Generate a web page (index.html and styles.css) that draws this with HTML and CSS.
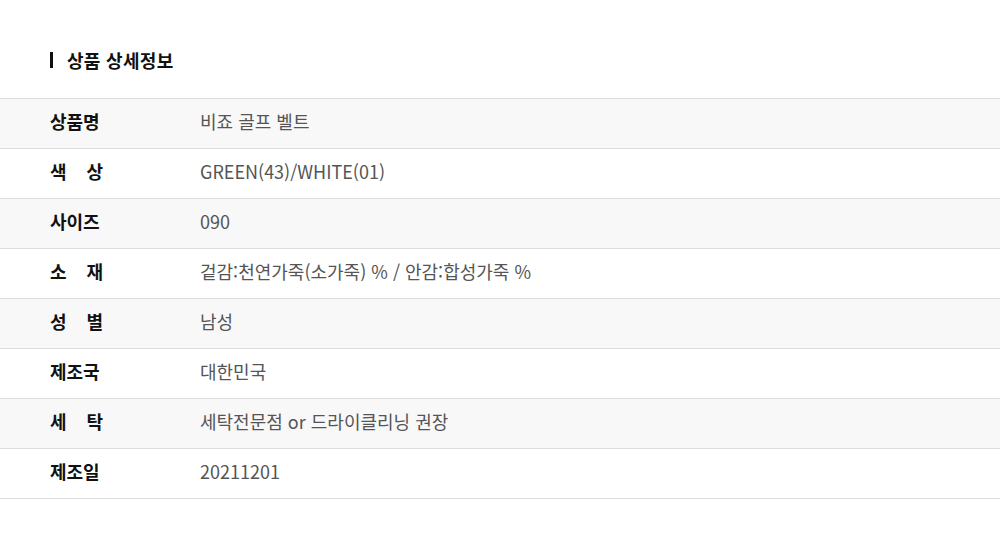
FILE: index.html
```html
<!DOCTYPE html>
<html lang="ko">
<head>
<meta charset="utf-8">
<link rel="stylesheet" href="styles.css">
</head>
<body>
<div class="page">
  <h2 class="title">상품 상세정보</h2>
  <div class="table">
    <div class="row odd"><div class="label">상품명</div><div class="value">비죠 골프 벨트</div></div>
    <div class="row"><div class="label">색 상</div><div class="value">GREEN(43)/WHITE(01)</div></div>
    <div class="row odd"><div class="label">사이즈</div><div class="value">090</div></div>
    <div class="row"><div class="label">소 재</div><div class="value">겉감:천연가죽(소가죽) % / 안감:합성가죽 %</div></div>
    <div class="row odd"><div class="label">성 별</div><div class="value">남성</div></div>
    <div class="row"><div class="label">제조국</div><div class="value">대한민국</div></div>
    <div class="row odd"><div class="label">세 탁</div><div class="value">세탁전문점 or 드라이클리닝 권장</div></div>
    <div class="row"><div class="label">제조일</div><div class="value">20211201</div></div>
  </div>
</div>
</body>
</html>
```
FILE: styles.css
```css
* { box-sizing: border-box; }
html, body { margin: 0; padding: 0; background: #fff; }
body { font-family: "Noto Sans CJK KR", "Noto Sans", sans-serif; color: #111; }
.page { padding-top: 47px; }
.title {
  margin: 0 0 0 50px;
  height: 26px;
  display: flex;
  align-items: center;
  font-size: 18px;
  font-weight: 700;
  color: #111;
  line-height: 26px;
  letter-spacing: 0.3px;
}
.title::before {
  content: "";
  width: 3px;
  height: 16px;
  background: #111;
  margin-right: 14px;
}
.table { margin-top: 25px; border-top: 1px solid #ddd; }
.row {
  height: 50px;
  border-bottom: 1px solid #ddd;
  display: flex;
  align-items: center;
  padding-bottom: 5px;
  background: #fff;
}
.row.odd { background: #f8f8f8; }
.label {
  width: 53px;
  margin-left: 50px;
  font-size: 18px;
  font-weight: 700;
  color: #111;
  text-align: justify;
  text-align-last: justify;
  line-height: 24px;
}
.value {
  margin-left: 97px;
  font-size: 18px;
  color: #555;
  line-height: 24px;
}
```
